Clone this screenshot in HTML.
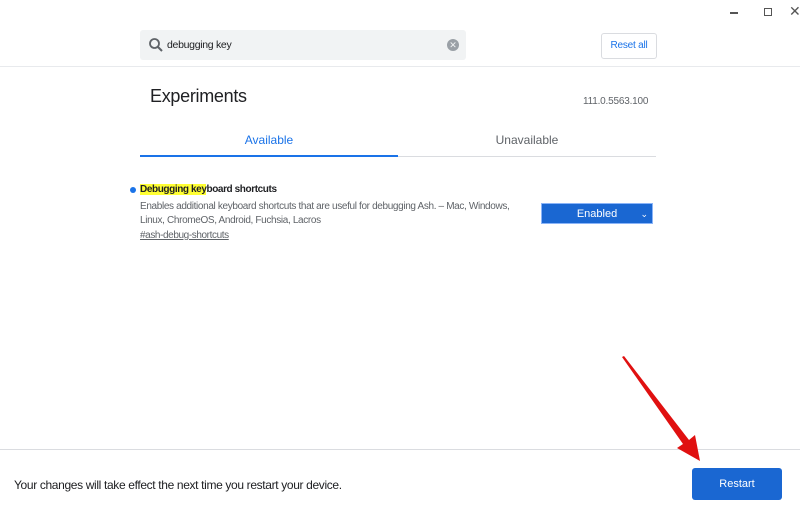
<!DOCTYPE html>
<html><head><meta charset="utf-8"><style>
body{margin:0;width:800px;height:512px;background:#fff;font-family:"Liberation Sans",sans-serif;position:relative;overflow:hidden;color:#202124}
.a{position:absolute}
</style></head><body>
<div class="a" style="left:724px;top:6px;font-size:12px;color:#444">
<span class="a" style="left:6px;top:6px;width:8px;height:2px;background:#555"></span>
<span class="a" style="left:40px;top:2px;width:6px;height:6px;border:1.5px solid #555"></span>
<span class="a" style="left:65px;top:-3px;font-size:14px;color:#555">✕</span>
</div>
<div class="a" style="left:140px;top:30px;width:326px;height:30px;background:#f1f3f4;border-radius:3px"></div>
<svg class="a" style="left:148px;top:37px" width="16" height="16" viewBox="0 0 16 16"><circle cx="6.5" cy="6.5" r="4.5" fill="none" stroke="#5f6368" stroke-width="1.8"/><line x1="10" y1="10" x2="14" y2="14" stroke="#5f6368" stroke-width="2"/></svg>
<div class="a" style="left:167px;top:39px;font-size:10.5px;letter-spacing:-0.3px">debugging key</div>
<div class="a" style="left:447px;top:39px;width:12px;height:12px;border-radius:50%;background:#9aa0a6;color:#f1f3f4;font-size:9px;line-height:12px;text-align:center">✕</div>
<div class="a" style="left:601px;top:33px;width:54px;height:24px;border:1px solid #dadce0;border-radius:3px;color:#1a73e8;font-size:10px;line-height:24px;text-align:center;letter-spacing:-0.2px">Reset all</div>
<div class="a" style="left:0;top:66px;width:800px;height:1px;background:#e8eaed"></div>
<div class="a" style="left:150px;top:86px;font-size:18px;letter-spacing:-0.3px">Experiments</div>
<div class="a" style="left:583px;top:96px;font-size:10px;color:#5f6368;letter-spacing:-0.2px">111.0.5563.100</div>
<div class="a" style="left:140px;top:133px;width:258px;text-align:center;font-size:12px;color:#1a73e8">Available</div>
<div class="a" style="left:398px;top:133px;width:258px;text-align:center;font-size:12px;color:#5f6368">Unavailable</div>
<div class="a" style="left:140px;top:156px;width:516px;height:1px;background:#dadce0"></div>
<div class="a" style="left:140px;top:155px;width:258px;height:2px;background:#1a73e8"></div>
<div class="a" style="left:130px;top:187px;width:6px;height:6px;border-radius:50%;background:#1a73e8"></div>
<div class="a" style="left:140px;top:184px;font-size:10px;font-weight:bold;letter-spacing:-0.4px"><span style="background:#ffff33">Debugging key</span>board shortcuts</div>
<div class="a" style="left:140px;top:200px;font-size:10px;color:#5f6368;line-height:14px;width:390px;letter-spacing:-0.35px">Enables additional keyboard shortcuts that are useful for debugging Ash. – Mac, Windows,<br>Linux, ChromeOS, Android, Fuchsia, Lacros</div>
<div class="a" style="left:140px;top:230px;font-size:10px;color:#5f6368;text-decoration:underline;letter-spacing:-0.4px">#ash-debug-shortcuts</div>
<div class="a" style="left:541px;top:203px;width:112px;height:21px;background:#1a67d2;color:#fff;font-size:11px;line-height:21px;text-align:center;border:1px solid #8ab4f8;box-sizing:border-box">Enabled<span class="a" style="right:4px;top:0;font-size:9px">⌄</span></div>
<div class="a" style="left:0;top:449px;width:800px;height:1px;background:#dadce0"></div>
<div class="a" style="left:14px;top:478px;font-size:12px;letter-spacing:-0.35px">Your changes will take effect the next time you restart your device.</div>
<div class="a" style="left:692px;top:468px;width:90px;height:32px;background:#1a67d2;border-radius:3px;color:#fff;font-size:11px;line-height:32px;text-align:center">Restart</div>
<svg class="a" style="left:0;top:0" width="800" height="512"><polygon points="622,357 624,356 689,440 695,435 700,461 677,448 683,444" fill="#e01010"/></svg>
</body></html>
